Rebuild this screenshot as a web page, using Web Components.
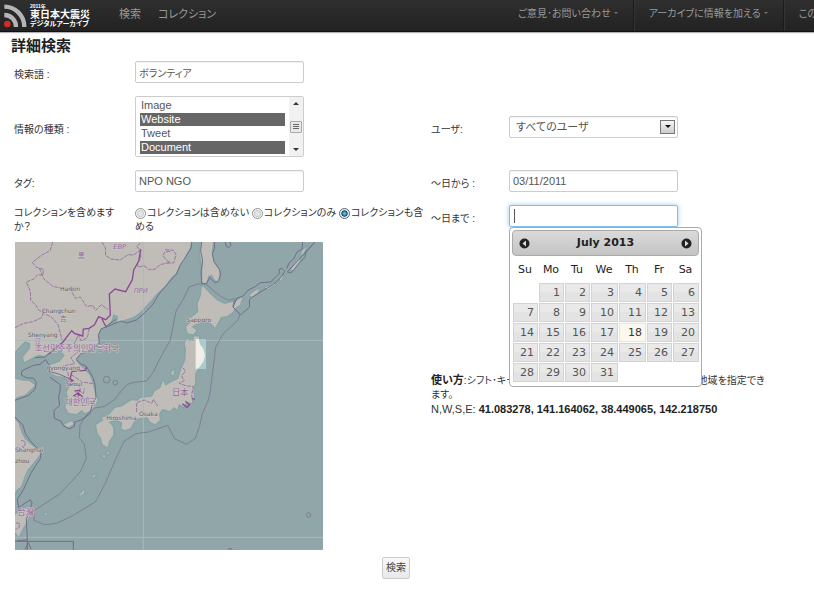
<!DOCTYPE html>
<html lang="ja">
<head>
<meta charset="utf-8">
<meta name="viewport" content="width=device-width, initial-scale=1">
<title>詳細検索</title>
<style>
  body {
    margin: 0;
    background: #fff;
    color: #333;
    font: 11px/14px "Liberation Sans", "Noto Sans CJK JP", sans-serif;
    font-feature-settings: "palt";
    overflow-x: hidden;
  }
</style>
</head>
<body>
<archive-navbar>
  <archive-logo slot="brand"></archive-logo>
  <nav-link slot="start">検索</nav-link>
  <nav-link slot="start">コレクション</nav-link>
  <nav-link slot="end" menu>ご意見･お問い合わせ</nav-link>
  <nav-link slot="end" menu>アーカイブに情報を加える</nav-link>
  <nav-link slot="end">この</nav-link>
</archive-navbar>
<search-page heading="詳細検索">
  <text-field label="検索語 :" value="ボランティア" compact></text-field>
  <span></span>
  <type-list label="情報の種類 :"></type-list>
  <user-select label="ユーザ:"></user-select>
  <text-field label="タグ:" value="NPO NGO"></text-field>
  <text-field label="～日から :" value="03/11/2011" narrow></text-field>
  <collection-choice></collection-choice>
  <text-field label="～日まで :" value="" narrow active><date-picker slot="popup"></date-picker></text-field>
  <region-map slot="map"></region-map>
  <region-help slot="help"></region-help>
</search-page>

<script>
function define(name, render) {
  customElements.define(name, class extends HTMLElement {
    connectedCallback() {
      if (this.shadowRoot) return;
      this.attachShadow({ mode: "open" }).innerHTML = render(this);
    }
  });
}

const fieldCss = `
  *{box-sizing:border-box}
  :host{display:grid;grid-template-columns:var(--label-width,121px) 1fr;align-items:center}
  label.name{padding-top:6px;font-size:10px}
  input.box,select{font:inherit;font-feature-settings:inherit;color:#555;width:169px;height:22px;margin:0;
    border:1px solid #ccc;border-radius:2px;background:#fff;outline:0;box-shadow:inset 0 1px 1px rgba(0,0,0,.06)}
`;

define("archive-navbar", () => `
  <style>
    :host{display:block}
    nav{display:flex;height:31px;overflow:hidden;background:linear-gradient(#2f2f2f,#222);border-bottom:1px solid #111;box-shadow:0 1px 1px rgba(0,0,0,.3)}
    .start{display:flex;flex:none;gap:17px;margin-left:29px}
    .end{display:flex;flex:none;margin-left:287px}
    .end ::slotted(*){padding:0 15px;border-right:1px solid #1a1a1a;box-shadow:1px 0 #343434}
    slot[name=brand]{display:block;flex:none}
  </style>
  <nav><slot name="brand"></slot><div class="start"><slot name="start"></slot></div><div class="end"><slot name="end"></slot></div></nav>`);

define("archive-logo", () => `
  <style>
    :host{display:block}
    a{display:flex;height:31px;color:#fff;text-decoration:none;width:90px}
    svg{flex:none;width:30px;height:31px}
    .t{display:flex;flex-direction:column;padding-top:3px;white-space:nowrap;font-weight:700}
    .t span:nth-child(1){font-size:5px;line-height:6px}
    .t span:nth-child(2){font-size:10px;line-height:11px}
    .t span:nth-child(3){font-size:7px;line-height:8px}
  </style>
  <a href="#">
    <svg viewBox="0 0 90 93" aria-hidden="true"><g fill="none" stroke="#b5b5b5" stroke-width="13">
      <path d="M13 20A60 60 0 0 1 73 81"/><path d="M13 45A35 35 0 0 1 48 81"/></g><circle cx="22" cy="72" r="10" fill="#d42a24"/></svg>
    <span class="t"><span>2011年</span><span>東日本大震災</span><span>デジタルアーカイブ</span></span>
  </a>`);

define("nav-link", el => `
  <style>
    :host{display:flex;align-items:center;height:31px;flex:none}
    a{color:#999;text-decoration:none;font-size:${el.slot === "end" ? 10 : 11}px;line-height:14px;white-space:nowrap;padding-bottom:4px}
    i{display:inline-block;border:2px solid transparent;border-top-color:#777;border-bottom:0;margin-left:3px;vertical-align:3px}
  </style><a href="#"><slot></slot>${el.hasAttribute("menu") ? "<i></i>" : ""}</a>`);

define("search-page", el => `
  <style>
    :host{display:block;padding:6px 36px 20px 14px}
    h1{margin:0 0 7px -3px;font-size:15px;line-height:16px;color:#222}
    .fields,.area{display:grid;grid-template-columns:410fr 347fr;column-gap:7px}
    .fields{row-gap:13px}
    .area{margin-top:8px}
    .actions{text-align:center;margin-top:7px}
    button{font:inherit;font-size:10px;font-feature-settings:inherit;color:#444;height:22px;padding:0 3px;border:1px solid #ccc;border-radius:2px;background:linear-gradient(#f8f8f8,#e8e8e8)}
    form{margin:0}
  </style>
  <form onsubmit="return false">
    <h1>${el.getAttribute("heading")}</h1>
    <div class="fields"><slot></slot></div>
    <div class="area"><slot name="map"></slot><slot name="help"></slot></div>
    <div class="actions"><button type="submit">検索</button></div>
  </form>`);

define("text-field", el => `
  <style>${fieldCss}
    :host{align-self:start}
    :host([narrow]){--label-width:78px}
    .wrap{position:relative;height:22px}
    input.box{display:block;padding:0 3px}
    :host([compact]) input{font-size:10px}
    :host([active]) input{border-color:#7fbfe8;box-shadow:0 0 5px rgba(82,168,236,.6);background:linear-gradient(#555,#555) 4px 3px/1px 14px no-repeat #fff}
    ::slotted(*){position:absolute;top:22px;left:0;z-index:2}
  </style>
  <label class="name" for="c">${el.getAttribute("label")}</label>
  <div class="wrap"><input class="box" id="c" type="text" value="${el.getAttribute("value")}"><slot name="popup"></slot></div>`);

define("type-list", el => `
  <style>${fieldCss}
    .list{width:169px;height:61px;border:1px solid #ccc;border-radius:2px;overflow:hidden;display:grid;grid-template-columns:1fr 14px}
    select{appearance:none;width:auto;height:59px;border:0;padding:2px 4px 0;overflow:hidden;box-shadow:none;border-radius:0}
    option{padding:0 1px;height:14px;min-height:14px;line-height:14px;border-bottom:1px solid #fff;color:#555}
    option:checked{background:linear-gradient(#666,#666);color:#fff}
    .bar{background:#f1f1f1;display:flex;flex-direction:column;align-items:center;justify-content:space-between;padding:5px 0}
    .up,.down{border:3px solid transparent;border-top:0;border-bottom-color:#333}
    .down{transform:rotate(180deg)}
    .thumb{width:12px;height:12px;border:1px solid #aaa;border-radius:1px;background:repeating-linear-gradient(#666 0 1px,transparent 1px 2px) center/6px 5px no-repeat #e8e8e8}
  </style>
  <label class="name" for="c">${el.getAttribute("label")}</label>
  <div class="list"><select id="c" multiple size="4"><option>Image<option selected>Website<option>Tweet<option selected>Document</select>
  <div class="bar" aria-hidden="true"><span class="up"></span><span class="thumb"></span><span class="down"></span></div></div>`);

define("user-select", el => `
  <style>${fieldCss}
    :host{--label-width:78px}
    select{appearance:none;padding:0 20px 0 6px}
    .wrap{position:relative;width:169px;height:22px}
    .arrow{position:absolute;right:3px;top:4px;width:15px;height:14px;border:1px solid #777;background:linear-gradient(#f6f6f6,#ccc);pointer-events:none;display:grid;place-items:center}
    .arrow::after{content:"";border:3px solid transparent;border-top-color:#111;border-bottom:0}
  </style>
  <label class="name" for="c">${el.getAttribute("label")}</label>
  <div class="wrap"><select id="c"><option>すべてのユーザ</option></select><span class="arrow"></span></div>`);

define("collection-choice", () => `
  <style>${fieldCss}
    :host{align-items:start;font-size:10px;padding-top:1px}
    #n{padding-right:16px}
    input{appearance:none;width:11px;height:11px;margin:0 1px 0 0;border:1px solid #8f8f8f;border-radius:50%;background:radial-gradient(#e4e4e4 30%,#ccc 50%,#fff 65%);vertical-align:-3px}
    input:checked{background:radial-gradient(#5fc3ea 10%,#134a70 45%,#eee 55%);border-color:#567}
  </style>
  <span id="n">コレクションを含めますか？</span>
  <div role="radiogroup" aria-labelledby="n"><label><input type="radio" name="r">コレクションは含めない</label> <label><input type="radio" name="r">コレクションのみ</label> <label><input type="radio" name="r" checked>コレクションも含める</label></div>`);

define("date-picker", () => {
  let rows = "";
  for (let w = 0; w < 5; w++) {
    rows += "<tr>";
    for (let d = 0; d < 7; d++) {
      const n = w * 7 + d;
      rows += n > 0 && n < 32 ? `<td><a href="#"${n === 18 ? ' class="today"' : ""}>${n}</a></td>` : "<td></td>";
    }
    rows += "</tr>";
  }
  return `
  <style>
    *{box-sizing:border-box}
    :host{box-sizing:border-box;display:block;width:193px;padding:2px 2px 4px;border:1px solid #aaa;border-radius:4px;background:#fff;color:#222;font:11px/14px "DejaVu Sans",sans-serif}
    header{display:flex;align-items:center;justify-content:space-between;height:26px;padding:0 6px;border:1px solid #aaa;border-radius:4px;background:linear-gradient(#dadada,#c4c4c4);font-weight:700}
    button{all:unset;width:11px;height:11px;display:block}
    svg{display:block;width:11px;height:11px}
    table{border-collapse:collapse;table-layout:fixed;width:187px;margin-top:3px}
    th{font-weight:400;padding:0 0 1px;height:23px}
    td{padding:1px 0 0 1px;height:20px}
    a{display:block;height:19px;line-height:17px;padding:0 3px;text-align:right;color:#555;text-decoration:none;border:1px solid #d3d3d3;background:linear-gradient(#e9e9e9 50%,#e3e3e3 50%)}
    a.today{background:#fbf9ee;border-color:#f5e8a0;color:#363636}
  </style>
  <header><button type="button" aria-label="Prev"><svg viewBox="0 0 11 11"><circle cx="5.5" cy="5.5" r="5" fill="#222"/><path d="M7 2.500v6L3.500 5.500z" fill="#ddd"/></svg></button><span>July 2013</span><button type="button" aria-label="Next"><svg viewBox="0 0 11 11"><circle cx="5.5" cy="5.5" r="5" fill="#222"/><path d="M4 2.500v6L7.500 5.500z" fill="#ddd"/></svg></button></header>
  <table><colgroup><col style="width:26px"><col style="width:26px"><col style="width:26px"><col style="width:28px"><col style="width:28px"><col style="width:26px"><col style="width:27px"></colgroup>
  <thead><tr>${["Su", "Mo", "Tu", "We", "Th", "Fr", "Sa"].map(d => `<th>${d}</th>`).join("")}</tr></thead><tbody>${rows}</tbody></table>`;
});

define("region-help", () => `
  <style>:host{display:block;padding-top:131px}p{margin:0}.how{font-size:10px;padding-right:8px}b{color:#222}.how b{font-size:11px}</style>
  <p class="how"><b>使い方</b>:シフト･キーを押しながらマウスをドラッグし対象となる地域を指定できます。</p>
  <p>N,W,S,E: <b>41.083278, 141.164062, 38.449065, 142.218750</b></p>`);

define("region-map", () => `
  <style>
    :host{display:block;padding-left:1px}
    svg{display:block;width:308px;height:308px}
    .land{fill:#c0bdb8}
    .halo{fill:none;stroke:#85a5a6;stroke-width:9;stroke-linejoin:round}
    .b{fill:none;stroke:#746c8b;stroke-width:3;stroke-linejoin:round}
    .p{fill:none;stroke:#9a76a0;stroke-width:3;stroke-dasharray:12 3}
    .n{fill:none;stroke:#8d4a94;stroke-width:4}
    text{font:18px "DejaVu Sans",sans-serif;fill:#5c5c66;stroke:#c9c6c5;stroke-width:3;paint-order:stroke}
    .k{font:25px "Noto Sans CJK JP","Noto Sans CJK KR",sans-serif;fill:#94679a}
    .s{font-size:20px}
    .r{fill:#94679a;font-size:20px;font-style:italic}
  </style>
  <svg viewBox="15 15 924 924" role="img" aria-label="地図">
    <defs><g id="lands">
      <path d="M10 10H545L540 34L530 50L522 70L510 85L498 108L485 120L465 147L440 170L424 190L400 215L384 231L370 240L340 250L320 258L325 238L310 232L305 250L290 268L272 275L266 292L268 318L240 335L230 345L206 357L197 370L207 382L225 400L238 413L247 435L255 470L263 490L244 522L224 528L215 519L200 531L176 528L166 510L175 489L170 465L184 440L165 420L140 417L122 408L118 385L148 375L164 355L152 340L118 345L104 358L86 353L70 361L43 375L39 361L61 333L60 318L45 313L31 326L15 344Z"/>
      <path d="M15 425L40 431L58 432L75 445L58 461L45 474L23 479L15 487ZM10 540L25 558L35 588L44 605L60 620L84 640L91 651L74 673L53 698L45 715L33 749L20 758L10 780Z"/>
      <path d="M15 835L33 817L60 810L63 821L52 851L38 875L26 899L15 885Z"/>
      <path d="M573 10H610L605 45L615 80L630 100L625 135L613 127L605 113L595 117L587 144L577 135L577 90L570 50Z"/>
      <path d="M575 149L582 151L600 170L620 189L643 201L668 195L679 210L668 225L652 237L633 240L615 272L602 258L584 252L558 261L544 269L559 279L551 292L533 289L528 269L541 257L539 245L565 225L563 200L573 175Z"/>
      <path d="M532 304L539 313L550 310L553 298L567 299L568 322L581 336L585 356L578 376L565 396L556 407L555 438L550 454L552 490L546 497L529 496L520 509L507 500L502 518L492 510L480 522L457 516L447 530L450 549L436 562L421 555L412 541L386 544L373 551L362 573L344 580L334 574L337 557L317 546L291 557L274 543L296 535L315 512L334 509L365 490L383 491L391 483L426 479L434 463L451 452L459 431L467 446L479 438L505 425L514 396L526 370L528 337L524 319Z"/>
      <path d="M258 564L280 550L300 558L309 571L310 593L297 613L293 631L278 622L273 603L263 589ZM162 563L183 553L192 560L174 571ZM485 405L492 399L491 413L485 414Z"/>
      <path d="M675 195L697 180L690 203L676 212ZM719 175L733 163L747 155L743 168L724 179ZM764 152L780 147L792 137L797 142L773 157ZM809 125L818 112L819 120L812 132ZM842 99L855 79L866 64L870 71L852 99ZM872 54L879 39L889 29L880 50ZM277 656L284 654L284 663ZM291 646L297 645L293 653ZM205 779L222 759L222 769ZM245 720L258 711L252 721ZM103 831L111 828L110 834Z"/>
    </g></defs>
    <path fill="#91a6a8" d="M0 0H960V960H0Z"/>
    <use href="#lands" class="halo"/><use href="#lands" class="land"/>
    <path stroke="#a9bab9" stroke-width="3" d="M400 15V939M15 310H939M15 901H939"/>
    <g class="b">
      <path d="M545 15L543 33L526 61L511 83L499 112L480 132L447 171L429 201L407 225L379 249L350 258L333 252L312 260L292 269L274 275L265 293L268 318L240 340L210 352L199 367L211 380L229 388L249 421L255 442L258 481L246 506L240 530L215 548L193 556L193 568L178 576L160 566L153 553L133 544L132 520L149 506L146 480L150 462L151 443L119 420"/>
      <path d="M118 403L149 412L180 426M118 403L118 385L107 368L90 382L71 385L36 401L34 414L48 422L71 424L79 437L75 457L56 475L15 490M15 540L39 565L46 590L61 612L93 646L91 665L64 706L42 755L22 787L26 812L43 800L61 788L66 798L60 820L49 846L52 909L22 911"/>
      <path d="M15 913H190V939M52 910V938M45 938L55 917L63 936"/>
      <path stroke-width="2" d="M465 337L480 312L498 223L520 186L537 150L563 141L587 141L613 163L632 178L656 190L674 185L668 210L690 232L683 250L640 290L617 330L612 375L606 420L600 468L594 492L577 530L569 566L556 604L530 622L494 605L473 565L416 585L378 590L342 613L317 666L286 739L257 794L188 836L140 859L104 863L72 850V821L149 771L185 733L212 703L229 664L223 622L208 602L210 563L236 526L254 513L282 509L313 489L328 469L352 442L372 436L410 432L430 406L447 370L465 337"/>
      <path d="M575 15L572 41L578 72L573 105L575 138L589 141L599 121L614 137L625 133L632 113L628 97L612 75L607 50L614 34L613 15M646 15L648 27L656 32L663 25L660 15"/>
      <path d="M669 210L681 183L698 178L714 160L735 149L752 137L782 135L801 116L808 109L807 97L816 94L824 103L814 120L798 136L783 147L758 161L728 180L718 189L719 210L692 233ZM830 95L837 78L851 66L861 45L876 36L878 15M915 15L889 43L884 62L866 80L849 101L842 108L832 105Z"/>
      <circle stroke-width="2" cx="290" cy="428" r="10"/><circle stroke-width="2" cx="316" cy="437" r="7"/><ellipse stroke-width="2" cx="896" cy="834" rx="6" ry="7"/><path d="M653 938Q660 930 667 938"/>
    </g>
    <g class="p">
      <path d="M128 15L121 40L96 54L67 76L79 91L100 97L99 115L83 113L71 126L49 135L61 163L62 190L78 204L84 217L103 230L124 240L144 263L156 308"/>
      <path d="M15 272L41 259L69 254L95 242L105 211M88 93L101 125L128 148L152 153L181 156L196 184L211 180L221 195L230 209L248 205L257 220L274 203L294 218"/>
      <path d="M276 15L286 33L287 55L302 66L330 69L354 53L371 54L392 38L380 29L394 15M392 37L392 66L382 78L385 91L401 86L418 98L437 96L450 83L480 76M480 43L465 45L458 56L469 69L480 76M465 38L490 40L498 53L491 78L467 78"/>
      <path d="M238 274L232 302L213 311L205 293L193 320L207 342L183 362L194 380L176 383L159 387M174 405L178 439L202 440L211 454L204 480M184 413L216 435L251 440M205 459L220 470L223 454M190 475L215 488L234 481L235 505M380 525V497L403 489L425 499L430 487L443 507"/>
      <path d="M520 393L526 404L514 416L523 431L507 439L530 447L550 448L545 475L548 494"/>
      <path d="M33 610L46 614L44 626L36 628L49 638L29 642M18 858L29 859L27 872L16 877"/>
    </g>
    <path class="n" d="M392 38L386 73L371 99L367 128L347 164L315 156L298 171L301 235L287 248L266 239L253 264L237 274L220 276L218 297L193 289L185 281L159 315L116 351M276 246L288 270M180 426L186 403L226 400L230 390M179 424L189 431L181 433M194 462L211 460M208 477L200 467M190 477L205 468L218 480M517 500L531 511L539 503L526 493M546 484L554 488"/>
    <path class="b" d="M116 351L103 360L75 362M288 268L318 247"/>
    <path fill="#a9cdcd" d="M557 306H588V396H557Z"/><path fill="#f1eee8" d="M557 306H566L570 322L580 335L585 356L579 376L566 393L557 396Z"/>
    <text x="150" y="161">Harbin</text><text x="95" y="228">Changchun</text><text x="53" y="301">Shenyang</text><text x="110" y="398">Pyongyang</text><text x="167" y="447">Seoul</text>
    <text x="529" y="255">Sapporo</text><text x="289" y="548">Hiroshima</text><text x="387" y="537">Osaka</text><text x="15" y="646">Shanghai</text><text x="15" y="678">zhou</text>
    <text class="r" x="310" y="35">ЕВР</text><text class="r" x="371" y="168">ПРИ</text>
    <text class="k s" x="204" y="64">黑</text><text class="k s" x="150" y="252">吉</text><text class="k s" x="74" y="320">辽</text>
    <text class="k" x="74" y="343">조선민주주의인민공화국</text><text class="k" x="165" y="504">대한민국</text><text class="k" x="486" y="474">日本</text><text class="k" x="22" y="833">台灣</text>
  </svg>`);
</script>
</body>
</html>
